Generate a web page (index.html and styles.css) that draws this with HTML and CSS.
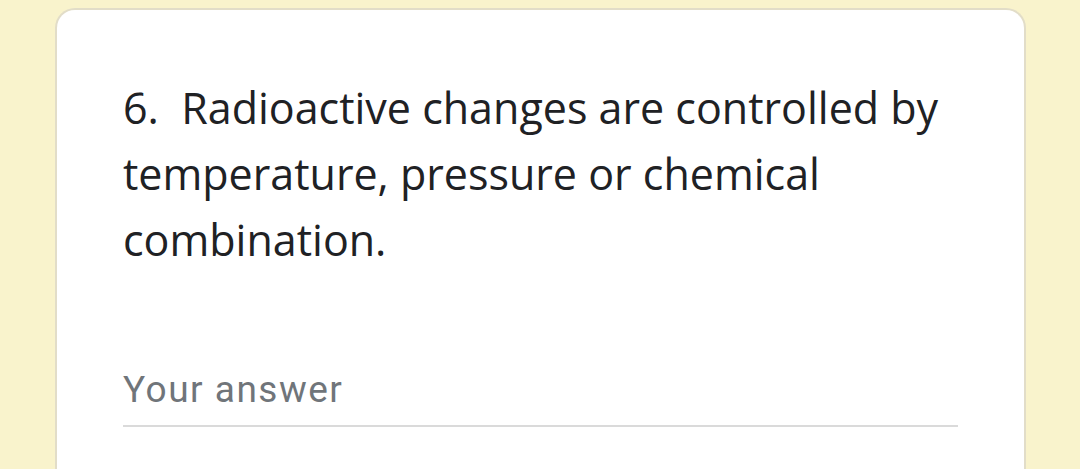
FILE: index.html
```html
<!DOCTYPE html>
<html>
<head>
<meta charset="utf-8">
<link rel="stylesheet" href="styles.css">
</head>
<body>
<div class="card">
  <div class="question">6.&nbsp; Radioactive changes are controlled by temperature, pressure or chemical combination.</div>
  <div class="answer">
    <div class="placeholder">Your answer</div>
  </div>
</div>
</body>
</html>
```

FILE: styles.css
```css
html, body {
  margin: 0;
  padding: 0;
}
body {
  background: #f9f3cc;
  height: 469px;
  overflow: hidden;
}
.card {
  margin: 8px 0 0 55px;
  width: 971px;
  height: 461px;
  box-sizing: border-box;
  background: #ffffff;
  border: 2px solid #e2ddc8;
  border-bottom: none;
  border-radius: 20px 20px 0 0;
  padding: 65px 66px 0 66px;
}
.question {
  font-family: "Open Sans", sans-serif;
  font-size: 43px;
  line-height: 66px;
  color: #202124;
}
.answer {
  margin-top: 95px;
  border-bottom: 2px solid #dadada;
  padding-bottom: 13px;
}
.placeholder {
  font-family: Roboto, sans-serif;
  font-size: 37px;
  line-height: 44px;
  letter-spacing: 1.5px;
  color: #70757a;
}
```
